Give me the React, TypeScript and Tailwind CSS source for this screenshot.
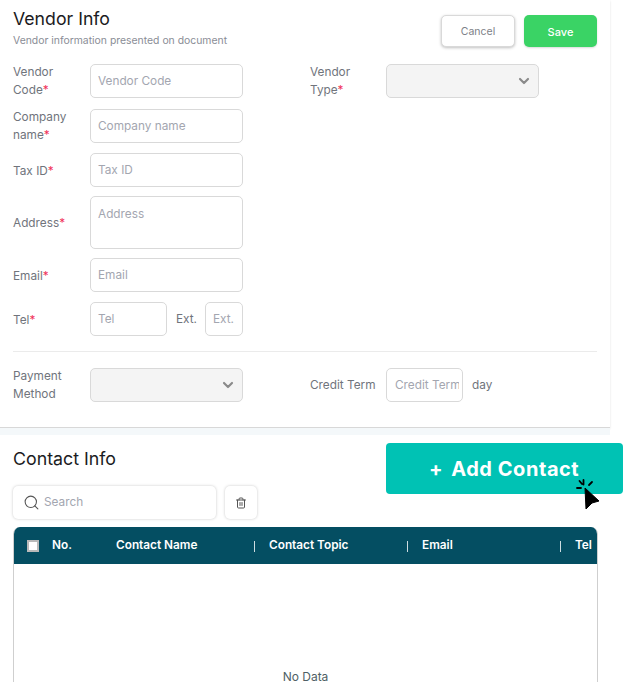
import { ChevronDown, Search, Trash2 } from 'lucide-react';
import type { ReactNode } from 'react';

const fieldText = 'text-[11.8px] text-[#70747c]';
const inputBox =
  'h-[34px] rounded-[5px] border border-[#d9d9d9] bg-white pl-[7px] pt-px text-[11.8px] text-[#a3a6b0] flex items-center overflow-hidden whitespace-nowrap';

function Req() {
  return <span className="text-[#f0325a]">*</span>;
}

function Label({ children, narrow, low }: { children: ReactNode; narrow?: boolean; low?: boolean }) {
  return (
    <div
      className={`${narrow ? 'w-[76px]' : 'w-[77px]'} ${low ? 'pt-[2px]' : ''} shrink-0 leading-[18px] ${fieldText}`}
    >
      {children}
    </div>
  );
}

function SelectBox() {
  return (
    <div className="flex h-[34px] w-[153px] items-center justify-end rounded-[5px] border border-[#d9d9d9] bg-[#f4f4f4] pr-[6px]">
      <ChevronDown size={16} strokeWidth={3.2} className="text-[#8a8a8a]" />
    </div>
  );
}

function HeadCell({ label, className }: { label: string; className: string }) {
  return (
    <div className={`flex shrink-0 items-center justify-between ${className}`}>
      <span>{label}</span>
      <span className="h-[11px] w-px bg-white/80" />
    </div>
  );
}

export default function App() {
  return (
    <div className='relative h-[682px] w-[624px] overflow-hidden bg-white font-["Inter",sans-serif]'>
      <div className="h-[428px] w-[610px] border-b border-[#d8d8d8] bg-white pl-[13px] pr-[13px] shadow-[0_1px_2px_rgba(0,0,0,0.12)]">
        <div className="flex justify-between pt-[7px]">
          <div>
            <h1 className="text-[17.7px] leading-[24px] text-[#1b1b22]">Vendor Info</h1>
            <p className="mt-[2px] text-[10.4px] leading-[16px] text-[#8a8d96]">
              Vendor information presented on document
            </p>
          </div>
          <div className="mt-[8px] flex gap-[9px]">
            <button className="h-[32px] w-[74px] rounded-[5px] border border-[#d9d9d9] bg-white pt-[2px] text-[10.5px] text-[#7d8087] shadow-[0_1px_3px_rgba(0,0,0,0.25)]">
              Cancel
            </button>
            <button className="h-[32px] w-[73px] rounded-[5px] bg-[#3ad365] pt-[2px] text-[11px] font-medium text-white shadow-[0_1px_2px_rgba(0,0,0,0.15)]">
              Save
            </button>
          </div>
        </div>

        <div className="mt-[14px] flex items-start">
          <div className="w-[297px] shrink-0">
            <div className="flex items-center">
              <Label>
                Vendor
                <br />
                Code<Req />
              </Label>
              <div className={`${inputBox} w-[153px]`}>Vendor Code</div>
            </div>
            <div className="mt-[9px] flex items-center">
              <Label>
                Company
                <br />
                name<Req />
              </Label>
              <div className={`${inputBox} w-[153px]`}>Company name</div>
            </div>
            <div className="mt-[9px] flex items-center">
              <Label low>
                Tax ID<Req />
              </Label>
              <div className={`${inputBox} w-[153px]`}>Tax ID</div>
            </div>
            <div className="mt-[9px] flex items-center">
              <Label>
                Address<Req />
              </Label>
              <div className="h-[53px] w-[153px] rounded-[5px] border border-[#d9d9d9] bg-white pl-[7px] pt-[8px] text-[11.8px] leading-[18px] text-[#a3a6b0]">
                Address
              </div>
            </div>
            <div className="mt-[9px] flex items-center">
              <Label low>
                Email<Req />
              </Label>
              <div className={`${inputBox} w-[153px]`}>Email</div>
            </div>
            <div className="mt-[10px] flex items-center">
              <Label low>
                Tel<Req />
              </Label>
              <div className={`${inputBox} w-[77px]`}>Tel</div>
              <span className={`ml-[9px] w-[29px] pt-px ${fieldText}`}>Ext.</span>
              <div className={`${inputBox} w-[38px]`}>Ext.</div>
            </div>
          </div>
          <div className="flex items-center">
            <Label narrow>
              Vendor
              <br />
              Type<Req />
            </Label>
            <SelectBox />
          </div>
        </div>

        <div className="mt-[15px] h-px w-full bg-[#ebebeb]" />

        <div className="mt-[15px] flex items-center">
          <div className="flex w-[297px] shrink-0 items-center">
            <Label>
              Payment
              <br />
              Method
            </Label>
            <SelectBox />
          </div>
          <div className="flex items-center">
            <Label narrow>Credit Term</Label>
            <div className={`${inputBox} w-[77px]`}>
              <span className="ml-px w-[64px] shrink-0 overflow-hidden">Credit Term</span>
            </div>
            <span className={`ml-[9px] pt-px ${fieldText}`}>day</span>
          </div>
        </div>
      </div>

      <div className="h-[7px] w-[610px] bg-[#f4f8fa]" />

      <div className="px-[13px]">
        <h2 className="mt-[12px] text-[17.8px] leading-[24px] text-[#1b1b22]">Contact Info</h2>
        <div className="mt-[15px] flex gap-[9px]">
          <div className="flex h-[33px] w-[203px] items-center gap-[4px] rounded-[5px] bg-white pl-[10px] text-[11.8px] text-[#a3a6b0] shadow-[0_0_3px_rgba(0,0,0,0.22)]">
            <Search size={17} strokeWidth={1.5} className="text-[#555]" />
            Search
          </div>
          <div className="flex h-[33px] w-[32px] items-center justify-center rounded-[5px] bg-white shadow-[0_0_3px_rgba(0,0,0,0.22)]">
            <Trash2 size={12} className="text-[#555]" />
          </div>
        </div>

        <div className="mt-[8px] h-[200px] w-[585px] overflow-hidden rounded-t-[7px] border-x border-[#cfcfcf]">
          <div className="-mx-px flex h-[37px] items-center bg-[#044e62] pt-px text-[11.8px] font-semibold whitespace-nowrap text-white">
            <div className="ml-[14px] h-[12px] w-[12px] shrink-0 border-2 border-[#b9b9b9] bg-white" />
            <span className="ml-[13px] w-[64px] shrink-0">No.</span>
            <HeadCell label="Contact Name" className="w-[139px]" />
            <HeadCell label="Contact Topic" className="ml-[14px] w-[139px]" />
            <HeadCell label="Email" className="ml-[14px] w-[139px]" />
            <span className="ml-[14px]">Tel</span>
          </div>
          <div className="mt-[107px] text-center text-[12px] leading-[12px] text-[#4f5f66]">No Data</div>
        </div>
      </div>

      <div className="absolute left-[386px] top-[443px] flex h-[51px] w-[237px] items-center rounded-[4px] bg-[#00c2b4] pl-[43px] text-[20px] font-bold tracking-[0.55px] text-white">
        <span className="mr-[8px]">+</span>
        Add Contact
      </div>

      <svg
        className="absolute left-[574px] top-[476px]"
        width="28"
        height="36"
        viewBox="0 0 28 36"
        fill="none"
      >
        <path d="M3 12h4M5.500 5l2.500 3M9.500 4v4.500M18 6l-3 3" stroke="#000" strokeWidth="1.8" strokeLinecap="round" />
        <path d="M11 12 25 25l-7 2-6 6z" fill="#000" stroke="#000" strokeLinejoin="round" />
      </svg>
    </div>
  );
}
